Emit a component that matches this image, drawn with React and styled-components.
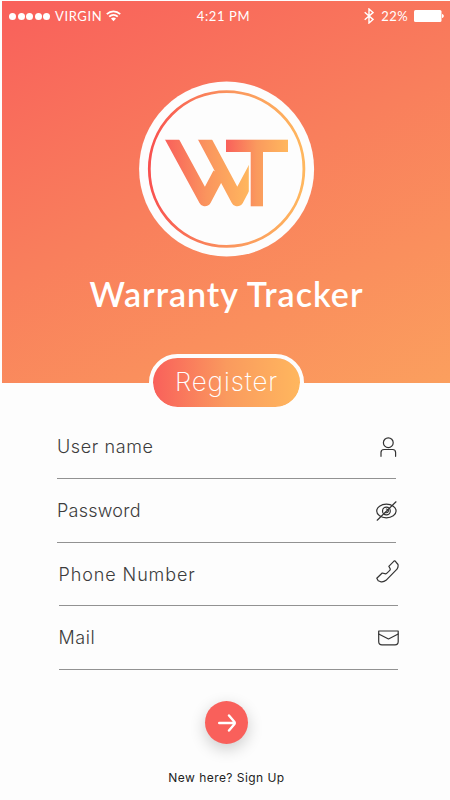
import React from 'react'
import styled, { createGlobalStyle } from 'styled-components'

const GlobalStyle = createGlobalStyle`
  * {
    box-sizing: border-box;
  }
  body {
    margin: 0;
    background: #fdfdfd;
    font-family: Inter, 'Liberation Sans', sans-serif;
  }
`

const Screen = styled.div`
  width: 450px;
  height: 800px;
  padding: 1px 0 0 2px;
  overflow: hidden;
  background: #fdfdfd;
`

const Hero = styled.header`
  display: flex;
  flex-direction: column;
  align-items: center;
  height: 382px;
  color: #fff;
  background: linear-gradient(155deg, #f9605b 0%, #f97f5c 48%, #fb9f5e 100%);
`

const StatusBar = styled.div`
  display: grid;
  flex: none;
  grid-template-columns: 1fr auto 1fr;
  align-items: center;
  width: 100%;
  height: 30px;
  padding: 0 6px 0 7px;
  font-family: Lato, sans-serif;
  font-size: 13px;
  letter-spacing: 0.6px;
`

const StatusGroup = styled.div`
  display: flex;
  align-items: center;
  justify-content: ${props => props.$end ? 'flex-end' : 'flex-start'};
`

const Signal = styled.div`
  display: flex;
  gap: 1.5px;
  margin-right: 5px;
`

const Dot = styled.span`
  width: 7px;
  height: 7px;
  border-radius: 50%;
  background: #fff;
`

const Time = styled.span`
  margin-right: 6px;
`

const Percent = styled.span`
  margin: 0 6px 0 7px;
  letter-spacing: 0.4px;
`

const Logo = styled.svg`
  display: block;
  flex: none;
  margin: 50px 0 0 1px;
`

const Title = styled.h1`
  flex: none;
  margin: 16px 0 0 1px;
  font-family: Lato, sans-serif;
  font-size: 34px;
  font-weight: 600;
  line-height: 42px;
  letter-spacing: 1px;
  white-space: nowrap;
`

const RegisterButton = styled.button`
  flex: none;
  width: 155px;
  height: 57px;
  margin-top: 39px;
  padding: 0 0 2px 1px;
  border: 4px solid #fdfdfd;
  border-radius: 29px;
  color: #fff;
  background: linear-gradient(90deg, #f9605b 0%, #fa9a5e 50%, #ffb75e 100%) padding-box;
  font-family: Inter, sans-serif;
  font-size: 26px;
  font-weight: 200;
  letter-spacing: 0.9px;
`

const Form = styled.form`
  display: flex;
  flex-direction: column;
  align-items: center;
  padding-top: 32px;
`

const Field = styled.label`
  display: flex;
  align-items: center;
  justify-content: space-between;
  width: 339px;
  height: ${props => props.$height}px;
  margin-left: ${props => props.$shift}px;
  border-bottom: 1px solid #929292;
`

const Label = styled.span`
  color: #3c3c3c;
  font-size: 18px;
  font-weight: 300;
  letter-spacing: ${props => props.$spacing}px;
`

const FieldIcon = styled.svg`
  display: block;
  margin: 0 -1px ${props => props.$raise || 0}px 0;
  fill: none;
  stroke: #333;
  stroke-width: 1.2;
  stroke-linecap: round;
  stroke-linejoin: round;
`

const Submit = styled.button`
  display: grid;
  place-items: center;
  width: 43px;
  height: 43px;
  margin: 31px 0 0 1px;
  padding: 0;
  border: 0;
  border-radius: 50%;
  background: #f9605b;
  box-shadow: 0 5px 16px rgba(0, 0, 0, 0.2);
`

const SignUp = styled.p`
  margin: 26px 0 0 1px;
  color: #222;
  font-size: 12px;
  line-height: 16px;
  letter-spacing: 0.45px;
`

const WifiIcon = () => (
  <svg width="15" height="12" viewBox="0 0 15 12" fill="none" stroke="#fff" strokeWidth="1.8">
    <path d="M0.8 4.2C4.6 0.4 10.4 0.4 14.2 4.2M3.2 6.7C5.7 4.4 9.3 4.4 11.8 6.7" />
    <path d="M5 8.4C6.4 7.2 8.6 7.2 10 8.4L7.5 11.2Z" fill="#fff" stroke="none" />
  </svg>
)

const BluetoothIcon = () => (
  <svg width="10" height="16" viewBox="0 0 10 16" fill="none" stroke="#fff" strokeWidth="1.4">
    <path d="M0.7 4.3L9 11.4L5 15V1L9 4.6L0.7 11.7" />
  </svg>
)

const BatteryIcon = () => (
  <svg width="30" height="12" viewBox="0 0 30 12" fill="#fff">
    <rect width="27.5" height="12" rx="1.5" />
    <path d="M28 4C30.4 4.3 30.4 7.7 28 8Z" />
  </svg>
)

const BrandLogo = () => (
  <Logo width="176" height="176" viewBox="139 81 176 176" aria-label="WT">
    <defs>
      <linearGradient id="ring" x1="0" x2="1">
        <stop offset="0" stopColor="#f9514f" />
        <stop offset="0.5" stopColor="#fa935e" />
        <stop offset="1" stopColor="#ffb75e" />
      </linearGradient>
      <linearGradient id="left" gradientUnits="userSpaceOnUse" x1="165" x2="249" y1="0" y2="0">
        <stop offset="0" stopColor="#f9605b" />
        <stop offset="0.5" stopColor="#fa955e" />
        <stop offset="1" stopColor="#ffb75e" />
      </linearGradient>
      <linearGradient id="right" gradientUnits="userSpaceOnUse" x1="226" x2="288" y1="0" y2="0">
        <stop offset="0" stopColor="#f9605b" />
        <stop offset="0.5" stopColor="#fa9a5e" />
        <stop offset="1" stopColor="#ffb75e" />
      </linearGradient>
      <clipPath id="mark">
        <rect x="160" y="139.7" width="88.8" height="70" />
      </clipPath>
    </defs>
    <circle cx="226.6" cy="169" r="87.5" fill="#fdfdfd" />
    <circle cx="226.6" cy="169" r="77.3" fill="none" stroke="url(#ring)" strokeWidth="2.8" />
    <g clipPath="url(#mark)" fill="none" stroke="url(#left)" strokeWidth="12.5" strokeLinejoin="round">
      <polyline points="168.9,133.7 205,200 219,173.5" />
      <polyline points="201.9,133.7 237.3,200 257,163" />
    </g>
    <rect x="226" y="139.7" width="62" height="12.3" fill="url(#right)" />
    <rect x="250.7" y="150" width="12.3" height="56.3" fill="url(#right)" />
  </Logo>
)

const UserIcon = () => (
  <FieldIcon width="17" height="20" viewBox="0 0 17 20">
    <circle cx="8.3" cy="5.7" r="4.9" />
    <path d="M1 19.3V15.5Q1 12.5 4 12.5H12.6Q15.6 12.5 15.6 15.5V19.3" />
  </FieldIcon>
)

const EyeOffIcon = () => (
  <FieldIcon width="21" height="20" viewBox="0 0 21 20">
    <ellipse cx="10.4" cy="10" rx="9.7" ry="6.8" />
    <circle cx="10.4" cy="10" r="3.9" />
    <path d="M10.4 8Q13 8.4 12.2 10.6Q11.2 12.2 9.4 11.6" />
    <path d="M1.2 19.2L20 0.8" />
  </FieldIcon>
)

const PhoneIcon = () => (
  <FieldIcon width="23" height="23" viewBox="0 0 23 23" $raise={5}>
    <path d="M0.8 18.2L6.2 13L9.8 13.9Q10.8 13.6 14 10.2L14.3 9L12.8 6.3L18 1.1Q19 0.4 19.6 1.7L22 4.5Q22.5 7 21 9.2L10 20.3Q7.5 22.4 4.8 21.8L2.2 20.8Z" />
  </FieldIcon>
)

const MailIcon = () => (
  <FieldIcon width="21" height="16" viewBox="0 0 21 16">
    <path d="M0.7 1H20.2V11.5Q20.2 14.8 17 14.8H4Q0.7 14.8 0.7 11.5Z" />
    <path d="M0.7 4L10.5 9L20.2 4" />
  </FieldIcon>
)

const fields = [
  { name: 'User name', icon: <UserIcon />, height: 64, shift: 1, spacing: 0.6 },
  { name: 'Password', icon: <EyeOffIcon />, height: 64, shift: 1, spacing: 0.25 },
  { name: 'Phone Number', icon: <PhoneIcon />, height: 63, shift: 4, spacing: 0.9 },
  { name: 'Mail', icon: <MailIcon />, height: 64, shift: 4, spacing: 0.6 },
]

const App = () => {
  return (
    <>
      <GlobalStyle />
      <Screen>
        <Hero>
          <StatusBar>
            <StatusGroup>
              <Signal>
                {[1, 2, 3, 4, 5].map((dot) => <Dot key={dot} />)}
              </Signal>
              <span>VIRGIN&nbsp;</span>
              <WifiIcon />
            </StatusGroup>
            <Time>4:21 PM</Time>
            <StatusGroup $end>
              <BluetoothIcon />
              <Percent>22%</Percent>
              <BatteryIcon />
            </StatusGroup>
          </StatusBar>
          <BrandLogo />
          <Title>Warranty Tracker</Title>
          <RegisterButton>Register</RegisterButton>
        </Hero>
        <Form onSubmit={(e) => e.preventDefault()}>
          {fields.map(({ name, icon, height, shift, spacing }) => (
            <Field key={name} $height={height} $shift={shift}>
              <Label $spacing={spacing}>{name}</Label>
              {icon}
            </Field>
          ))}
          <Submit aria-label="Sign up">
            <svg width="18" height="18" viewBox="0 0 18 18" fill="none" stroke="#fff" strokeWidth="2.4" strokeLinecap="round" strokeLinejoin="round">
              <path d="M1.2 9H16.5M11 1.5L16.5 8Q17 9 16.5 10L11 16.5" />
            </svg>
          </Submit>
          <SignUp>New here? Sign Up</SignUp>
        </Form>
      </Screen>
    </>
  )
}

export default App
